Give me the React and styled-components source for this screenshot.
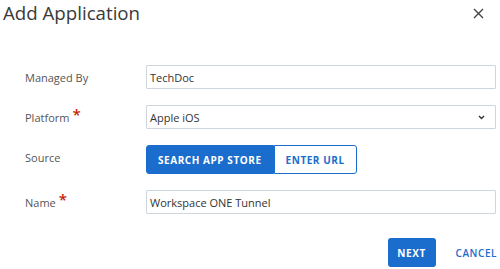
import React from "react";
import styled, { createGlobalStyle } from "styled-components";

const Global = createGlobalStyle`
  html, body { margin: 0; padding: 0; background: #fff; }
  body { font-family: "Open Sans", "Noto Sans", sans-serif; color: #333; }
  * { box-sizing: border-box; }
`;

const Dialog = styled.div`
  width: 500px;
  height: 269px;
  display: flex;
  flex-direction: column;
  overflow: hidden;
`;

const Header = styled.div`
  display: flex;
  align-items: center;
  justify-content: space-between;
  height: 26px;
  padding: 0 15px 0 3px;
`;

const Title = styled.h1`
  margin: 0;
  font-size: 18.7px;
  font-weight: 400;
  color: #3a3a3a;
  line-height: 26px;
`;

const Close = styled.button`
  border: 0;
  background: none;
  padding: 0;
  width: 14px;
  height: 14px;
  display: flex;
  align-items: center;
  justify-content: center;
  cursor: pointer;
`;

const Form = styled.div`
  display: flex;
  flex-direction: column;
  gap: 16px;
  padding: 39px 4px 0 25px;
`;

const Row = styled.div`
  display: grid;
  grid-template-columns: 121px 1fr;
  align-items: center;
`;

const Label = styled.div`
  font-size: 11px;
  color: #565656;
  display: flex;
  align-items: flex-start;
  gap: 3px;
  margin-top: ${(p) => p.$shift || 0}px;
`;

const Req = styled.span`
  color: #c92100;
  font-size: 15px;
  font-weight: 600;
  line-height: 11px;
  margin-top: -1px;
`;

const Input = styled.div`
  height: 24px;
  border: 1px solid #cfd6dd;
  border-radius: 1px;
  font-size: 11px;
  color: #333;
  padding: 0 0 0 3px;
  display: flex;
  align-items: center;
  justify-content: space-between;
`;

const Chevron = styled.span`
  display: flex;
  padding-right: 10px;
`;

const Segmented = styled.div`
  display: flex;
  height: 29px;
`;

const Seg = styled.button`
  font-family: "Open Sans", "Noto Sans", sans-serif;
  font-size: 10px;
  font-weight: 700;
  letter-spacing: 0.55px;
  padding: 0 ${(p) => p.$pad}px;
  border: 1px solid #1a6dcc;
  background: ${(p) => (p.$active ? "#1a6dcc" : "#fff")};
  color: ${(p) => (p.$active ? "#fff" : "#1a6dcc")};
  border-radius: ${(p) => (p.$first ? "3px 0 0 3px" : "0 3px 3px 0")};
  cursor: pointer;
`;

const Footer = styled.div`
  margin-top: auto;
  display: flex;
  justify-content: flex-end;
  align-items: center;
  gap: 20px;
  padding: 0 3px 2px 0;
`;

const Primary = styled.button`
  font-family: "Open Sans", "Noto Sans", sans-serif;
  font-size: 10px;
  font-weight: 700;
  letter-spacing: 0.6px;
  height: 29px;
  width: 48px;
  border: 0;
  border-radius: 3px;
  background: #1a6dcc;
  color: #fff;
  cursor: pointer;
`;

const Link = styled.button`
  font-family: "Open Sans", "Noto Sans", sans-serif;
  font-size: 10px;
  font-weight: 600;
  letter-spacing: 0.55px;
  border: 0;
  background: none;
  color: #1a6dcc;
  padding: 0;
  height: 29px;
  cursor: pointer;
`;

export default function App() {
  return (
    <>
      <Global />
      <Dialog>
        <Header>
          <Title>Add Application</Title>
          <Close aria-label="Close">
            <svg width="11" height="11" viewBox="0 0 11 11">
              <path d="M1 1 L10 10 M10 1 L1 10" stroke="#444" strokeWidth="1.4" />
            </svg>
          </Close>
        </Header>
        <Form>
          <Row>
            <Label>Managed By</Label>
            <Input>TechDoc</Input>
          </Row>
          <Row>
            <Label>
              Platform<Req>*</Req>
            </Label>
            <Input>
              Apple iOS
              <Chevron>
                <svg width="7" height="5" viewBox="0 0 7 5">
                  <path d="M1 1 L3.5 3.5 L6 1" stroke="#333" strokeWidth="1.4" fill="none" />
                </svg>
              </Chevron>
            </Input>
          </Row>
          <Row>
            <Label $shift={-5}>Source</Label>
            <Segmented>
              <Seg $active $first $pad={11}>SEARCH APP STORE</Seg>
              <Seg $pad={11}>ENTER URL</Seg>
            </Segmented>
          </Row>
          <Row>
            <Label>
              Name<Req>*</Req>
            </Label>
            <Input>Workspace ONE Tunnel</Input>
          </Row>
        </Form>
        <Footer>
          <Primary>NEXT</Primary>
          <Link>CANCEL</Link>
        </Footer>
      </Dialog>
    </>
  );
}
